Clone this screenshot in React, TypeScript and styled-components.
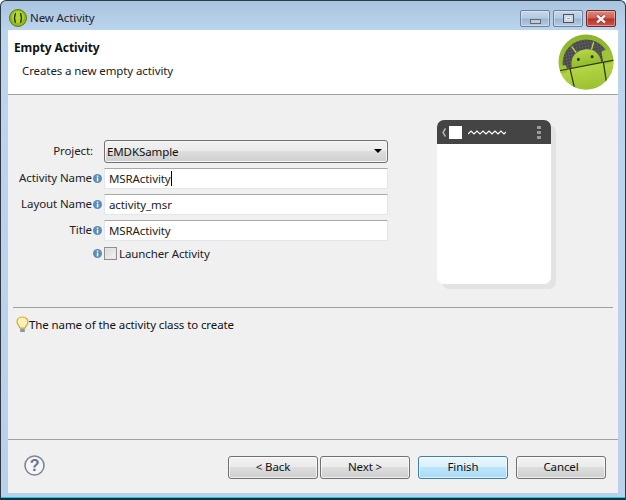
import React from "react";
import styled, { createGlobalStyle } from "styled-components";

const GlobalStyle = createGlobalStyle`
  html, body {
    margin: 0;
    padding: 0;
    background: #ffffff;
  }
  * {
    box-sizing: border-box;
  }
`;

const Window = styled.div`
  display: flex;
  flex-direction: column;
  width: 626px;
  height: 500px;
  padding: 0 7px 5px 7px;
  background: linear-gradient(#a9c4df 0, #bcd4ec 30px, #b9d1ea 100%);
  border: 1px solid #2c3a45;
  border-bottom: 2px solid #14323c;
  border-radius: 6px 6px 0 0;
  box-shadow: inset 0 -1px 0 #19c4dc;
  font-family: "Noto Sans", "Open Sans", sans-serif;
  font-size: 11.5px;
  letter-spacing: -0.1px;
  color: #1a1a1a;
`;

const TitleBar = styled.div`
  display: flex;
  align-items: flex-start;
  height: 29px;
  flex: none;
`;

const TitleText = styled.span`
  margin: 9px 0 0 3px;
  line-height: 16px;
  color: #1c2530;
`;

const AppIcon = styled.svg`
  margin: 8px 0 0 1px;
  flex: none;
`;

const CaptionGroup = styled.div`
  display: flex;
  margin: 9px 2px 0 auto;
  gap: 3px;
`;

const CaptionButton = styled.div<{ $close?: boolean }>`
  display: flex;
  align-items: center;
  justify-content: center;
  width: 30px;
  height: 17px;
  border: 1px solid ${(p) => (p.$close ? "#6e2a28" : "#6c8198")};
  border-radius: 2px;
  background: ${(p) =>
    p.$close
      ? "linear-gradient(#dc8a80 0, #cf5f55 45%, #b83128 55%, #c9584e 100%)"
      : "linear-gradient(#c6d8ea 0, #b4cbe2 45%, #9db6d0 55%, #b5cce2 100%)"};
  box-shadow: inset 0 0 0 1px rgba(255, 255, 255, 0.35);
`;

const MinimizeGlyph = styled.div`
  width: 11px;
  height: 5px;
  margin-top: 5px;
  background: #c6cbd1;
  border: 1px solid #5c6b7b;
`;

const MaximizeGlyph = styled.div`
  display: flex;
  align-items: center;
  justify-content: center;
  width: 11px;
  height: 9px;
  background: #cfd8e2;
  border: 1px solid #45546a;
`;

const MaximizeInner = styled.div`
  width: 5px;
  height: 3px;
  background: #8fa6bf;
  border: 1px solid #e8eef4;
`;

const CloseGlyph = styled.svg`
  display: block;
`;

const Panel = styled.div`
  display: flex;
  flex-direction: column;
  flex: 1;
  min-height: 0;
  background: #f0f0f0;
`;

const Header = styled.div`
  display: flex;
  flex: none;
  justify-content: space-between;
  height: 65px;
  padding: 0 4px 0 6px;
  background: #ffffff;
  border-bottom: 1px solid #a0a0a0;
`;

const HeaderTitle = styled.div`
  margin-top: 9px;
  line-height: 17px;
  font-weight: 700;
  font-size: 12px;
  color: #111111;
`;

const HeaderDesc = styled.div`
  margin: 6px 0 0 8px;
  line-height: 17px;
  color: #222222;
`;

const Logo = styled.svg`
  margin-top: 4px;
  flex: none;
`;

const Body = styled.div`
  display: flex;
  flex: none;
  height: 212px;
`;

const Form = styled.div`
  display: grid;
  grid-template-columns: 96px 284px;
  grid-auto-rows: min-content;
  align-items: center;
  row-gap: 5px;
  padding-top: 45px;
`;

const LabelCell = styled.div<{ $short?: boolean }>`
  display: flex;
  align-items: center;
  justify-content: flex-end;
  height: ${(p) => (p.$short ? "15px" : "21px")};
  padding-bottom: ${(p) => (p.$short ? "0" : "1px")};
  color: #222222;
  line-height: 16px;
`;

const Info = styled.svg`
  flex: none;
  margin: 0 2px 0 1px;
`;

const ProjectLabel = styled(LabelCell)`
  padding-right: 11px;
  height: 23px;
`;

const Select = styled.div`
  display: flex;
  align-items: center;
  justify-content: space-between;
  height: 23px;
  padding: 0 4px 1px 2px;
  border: 1px solid #707070;
  border-radius: 3px;
  background: linear-gradient(#f2f2f2 0, #ebebeb 47%, #dddddd 50%, #cfcfcf 100%);
  box-shadow: inset 0 0 0 1px #f6f6f6;
  color: #111111;
`;

const Arrow = styled.div`
  width: 0;
  height: 0;
  border-left: 4px solid transparent;
  border-right: 4px solid transparent;
  border-top: 4px solid #000000;
  margin-right: 1px;
`;

const Input = styled.div`
  display: flex;
  align-items: center;
  height: 21px;
  padding: 0 4px 1px;
  background: #ffffff;
  border: 1px solid #e3e7ec;
  border-top-color: #a8a8ab;
  border-radius: 1px;
  color: #222222;
`;

const Caret = styled.span`
  display: inline-block;
  width: 1px;
  height: 15px;
  background: #000000;
`;

const CheckRow = styled.div`
  display: flex;
  align-items: center;
  gap: 2px;
  color: #222222;
`;

const CheckBox = styled.div`
  width: 13px;
  height: 13px;
  border: 1px solid #8e8f8f;
  background: linear-gradient(135deg, #d8d8d8, #f4f4f4);
  box-shadow: inset 0 0 0 1px #e6e6e6;
`;

const Preview = styled.div`
  display: flex;
  flex-direction: column;
  width: 114px;
  height: 164px;
  margin: 25px 0 0 49px;
  border-radius: 7px;
  background: #ffffff;
  box-shadow: 5px 5px 0 #e3e3e3;
  overflow: hidden;
`;

const PreviewBar = styled.div`
  display: flex;
  align-items: center;
  flex: none;
  height: 24px;
  padding: 0 10px 0 5px;
  background: #444444;
`;

const PreviewBack = styled.svg`
  flex: none;
`;

const PreviewSquare = styled.div`
  width: 13px;
  height: 13px;
  margin-left: 3px;
  background: #ffffff;
`;

const PreviewWave = styled.svg`
  margin-left: 6px;
  flex: none;
`;

const PreviewMenu = styled.div`
  display: flex;
  flex-direction: column;
  gap: 2px;
  margin-left: auto;
`;

const PreviewDot = styled.div`
  width: 4px;
  height: 3px;
  background: #9a9a9a;
`;

const Divider = styled.div<{ $inset?: boolean }>`
  flex: none;
  height: 1px;
  margin: 0 ${(p) => (p.$inset ? "5px" : "0")};
  background: #a0a0a0;
`;

const Hint = styled.div`
  display: flex;
  flex: 1;
  align-items: flex-start;
  padding: 8px 0 0 8px;
  color: #111111;
  line-height: 17px;
`;

const BulbIcon = styled.svg`
  flex: none;
`;

const Footer = styled.div`
  display: flex;
  flex: none;
  align-items: flex-start;
  height: 53px;
  padding: 16px 12px 0 16px;
`;

const HelpIcon = styled.svg`
  flex: none;
  margin: -1px auto 0 0;
`;

const Button = styled.div<{ $primary?: boolean; $gap?: number }>`
  display: flex;
  align-items: center;
  justify-content: center;
  width: 90px;
  height: 23px;
  padding-bottom: 2px;
  margin-left: ${(p) => p.$gap ?? 0}px;
  border: 1px solid ${(p) => (p.$primary ? "#3c7fb1" : "#707070")};
  border-radius: 3px;
  background: ${(p) =>
    p.$primary
      ? "linear-gradient(#eaf6fd 0, #d9f0fc 47%, #bee6fd 50%, #a7d9f5 100%)"
      : "linear-gradient(#f2f2f2 0, #ebebeb 47%, #dddddd 50%, #cfcfcf 100%)"};
  box-shadow: inset 0 0 0 1px rgba(255, 255, 255, 0.7);
  color: #111111;
`;

const InfoIcon = () => (
  <Info width="9" height="9" viewBox="0 0 9 9">
    <circle cx="4.5" cy="4.5" r="4.5" fill="#5b8db8" />
    <rect x="3.8" y="1.5" width="1.5" height="1.4" fill="#ffffff" />
    <rect x="3.8" y="3.6" width="1.5" height="3.8" fill="#ffffff" />
  </Info>
);

const AndroidLogo = () => (
  <Logo width="56" height="56" viewBox="0 0 56 56">
    <defs>
      <linearGradient id="disc-fill" x1="0" y1="0" x2="0" y2="1">
        <stop offset="0" stopColor="#8fb52c" />
        <stop offset="1" stopColor="#a3c633" />
      </linearGradient>
      <linearGradient id="robot-fill" x1="0" y1="0" x2="0" y2="1">
        <stop offset="0" stopColor="#b6d646" />
        <stop offset="1" stopColor="#93bb2a" />
      </linearGradient>
      <pattern id="mesh" width="3" height="3" patternUnits="userSpaceOnUse">
        <rect width="3" height="3" fill="#454547" />
        <rect width="1" height="3" fill="#5c5c5e" />
        <rect width="3" height="1" fill="#5c5c5e" />
      </pattern>
      <clipPath id="disc-clip">
        <circle cx="28" cy="28" r="27.5" />
      </clipPath>
    </defs>
    <circle cx="28" cy="28" r="27.5" fill="url(#disc-fill)" />
    <g clipPath="url(#disc-clip)">
      <g transform="rotate(-11 28 28)">
        <circle cx="28" cy="29" r="23.5" fill="url(#mesh)" />
        <rect x="-6" y="31" width="68" height="32" fill="url(#robot-fill)" />
        <rect x="1" y="27" width="7" height="8" rx="2" fill="#9fc437" />
        <rect x="45" y="20" width="9" height="14" rx="3" fill="#9fc437" />
        <path d="M13 31 C13 21 19 15.5 28 15.5 C37 15.5 43 21 43 31 Z" fill="url(#robot-fill)" />
        <path d="M-4 31.5 L60 31.5" stroke="#28340f" strokeWidth="1.1" />
        <path d="M11 31.5 L12 58" stroke="#28340f" strokeWidth="1.2" />
        <path d="M45 31.5 L44 58" stroke="#28340f" strokeWidth="1.2" />
        <path d="M20 16.5 L17 10.5" stroke="#b9d84c" strokeWidth="1.3" strokeLinecap="round" />
        <path d="M36 16.5 L39 10.5" stroke="#b9d84c" strokeWidth="1.3" strokeLinecap="round" />
        <circle cx="21" cy="24" r="1.5" fill="#28340f" />
        <circle cx="35" cy="24" r="1.5" fill="#28340f" />
      </g>
    </g>
  </Logo>
);

const App: React.FC = () => {
  return (
    <>
      <GlobalStyle />
      <Window>
        <TitleBar>
          <AppIcon width="18" height="18" viewBox="0 0 18 18">
            <circle cx="9" cy="9" r="8.5" fill="#93b81c" stroke="#5c7a10" />
            <circle cx="9" cy="8" r="6" fill="#b3d62f" />
            <path d="M7 4.5 C5.2 4.5 6.5 8.8 5 9 C6.5 9.2 5.2 13.5 7 13.5" fill="none" stroke="#1d2a06" strokeWidth="1.4" />
            <path d="M11 4.5 C12.8 4.5 11.5 8.8 13 9 C11.5 9.2 12.8 13.5 11 13.5" fill="none" stroke="#1d2a06" strokeWidth="1.4" />
          </AppIcon>
          <TitleText>New Activity</TitleText>
          <CaptionGroup>
            <CaptionButton>
              <MinimizeGlyph />
            </CaptionButton>
            <CaptionButton>
              <MaximizeGlyph>
                <MaximizeInner />
              </MaximizeGlyph>
            </CaptionButton>
            <CaptionButton $close>
              <CloseGlyph width="14" height="10" viewBox="0 0 14 10">
                <path d="M3 1.5 L11 8.5 M11 1.5 L3 8.5" stroke="#5a2a28" strokeWidth="3.4" />
                <path d="M3 1.5 L11 8.5 M11 1.5 L3 8.5" stroke="#f4ecea" strokeWidth="2.4" />
              </CloseGlyph>
            </CaptionButton>
          </CaptionGroup>
        </TitleBar>
        <Panel>
          <Header>
            <div>
              <HeaderTitle>Empty Activity</HeaderTitle>
              <HeaderDesc>Creates a new empty activity</HeaderDesc>
            </div>
            <AndroidLogo />
          </Header>
          <Body>
            <Form>
              <ProjectLabel>Project:</ProjectLabel>
              <Select>
                EMDKSample
                <Arrow />
              </Select>
              <LabelCell>
                Activity Name
                <InfoIcon />
              </LabelCell>
              <Input>
                MSRActivity
                <Caret />
              </Input>
              <LabelCell>
                Layout Name
                <InfoIcon />
              </LabelCell>
              <Input>activity_msr</Input>
              <LabelCell>
                Title
                <InfoIcon />
              </LabelCell>
              <Input>MSRActivity</Input>
              <LabelCell $short>
                <InfoIcon />
              </LabelCell>
              <CheckRow>
                <CheckBox />
                Launcher Activity
              </CheckRow>
            </Form>
            <Preview>
              <PreviewBar>
                <PreviewBack width="4" height="9" viewBox="0 0 4 9">
                  <path d="M3.5 0.5 L1 4.5 L3.5 8.5" fill="none" stroke="#b5b5b5" strokeWidth="1.5" />
                </PreviewBack>
                <PreviewSquare />
                <PreviewWave width="38" height="7" viewBox="0 0 38 7">
                  <path
                    d="M0 5 L3 2 L6 5 L9 2 L12 5 L15 2 L18 5 L21 2 L24 5 L27 2 L30 5 L33 2 L36 5 L38 3"
                    fill="none"
                    stroke="#ffffff"
                    strokeWidth="1.2"
                  />
                </PreviewWave>
                <PreviewMenu>
                  <PreviewDot />
                  <PreviewDot />
                  <PreviewDot />
                </PreviewMenu>
              </PreviewBar>
            </Preview>
          </Body>
          <Divider $inset />
          <Hint>
            <BulbIcon width="13" height="17" viewBox="0 0 13 17">
              <path
                d="M6.5 1 C3 1 1 3.4 1 6 C1 8.4 3.4 9.6 4 12 L9 12 C9.6 9.6 12 8.4 12 6 C12 3.4 10 1 6.5 1 Z"
                fill="#fdf1b8"
                stroke="#d8a92c"
                strokeWidth="1.2"
              />
              <rect x="4.2" y="12.5" width="4.6" height="3.5" fill="#8c96a3" />
            </BulbIcon>
            The name of the activity class to create
          </Hint>
          <Divider />
          <Footer>
            <HelpIcon width="21" height="21" viewBox="0 0 21 21">
              <circle cx="10.5" cy="10.5" r="9.5" fill="#f5f6f8" stroke="#7d8799" strokeWidth="1.6" />
              <text x="10.5" y="16" textAnchor="middle" fontFamily="Liberation Sans, sans-serif" fontWeight="700" fontSize="16" fill="#69748a">
                ?
              </text>
            </HelpIcon>
            <Button>&lt; Back</Button>
            <Button $gap={2}>Next &gt;</Button>
            <Button $gap={8} $primary>
              Finish
            </Button>
            <Button $gap={8}>Cancel</Button>
          </Footer>
        </Panel>
      </Window>
    </>
  );
};

export default App;
